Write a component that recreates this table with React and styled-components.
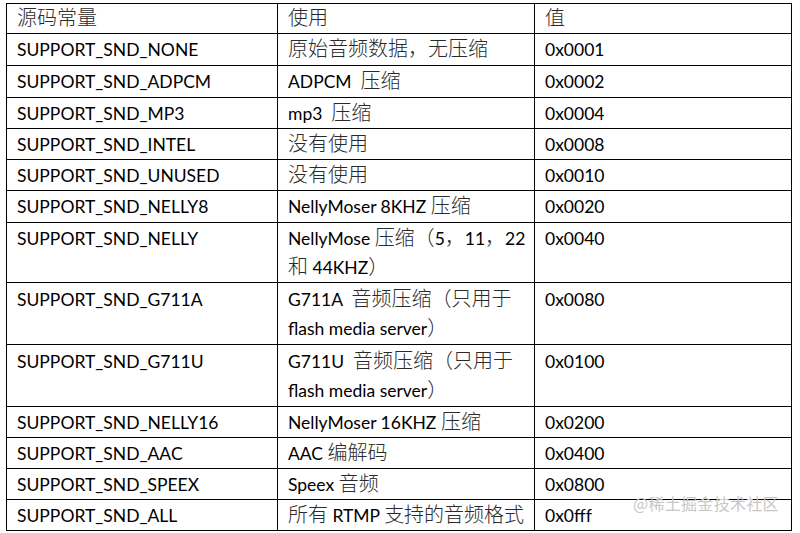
import React from 'react';
import styled, { createGlobalStyle } from 'styled-components';

const GlobalStyle = createGlobalStyle`
  body {
    margin: 0;
    background: #fff;
  }
`;

const Page = styled.div`
  position: relative;
  width: 800px;
  height: 533px;
  overflow: hidden;
  padding: 3px 0 0 6px;
  box-sizing: border-box;
`;

const Table = styled.table`
  border-collapse: collapse;
  width: 785px;
  table-layout: fixed;
  font-family: "Lato", "Noto Sans CJK SC", sans-serif;
  font-size: 17.5px;
  color: #000;
`;

const Row = styled.tr`
  height: ${p => p.$h}px;
`;

const Cell = styled.td`
  border: 1px solid #000;
  padding: ${p => p.$pt}px 10px 0 10px;
  vertical-align: top;
  line-height: ${p => (p.$multi ? 28.5 : 28)}px;
  white-space: nowrap;
  overflow: hidden;
`;

const Cjk = styled.span`
  font-family: "Noto Sans CJK SC", sans-serif;
  font-size: 20px;
  line-height: 1;
  font-weight: 300;
  color: #2a2a2a;
`;

const Watermark = styled.div`
  position: absolute;
  left: 633px;
  top: 491px;
  font-family: "Noto Sans CJK SC", sans-serif;
  font-size: 16px;
  color: #c8c8c8;
  letter-spacing: 0.3px;
`;

const rows = [
  { h: 30, pt: 1, a: <Cjk>源码常量</Cjk>, b: <Cjk>使用</Cjk>, c: <Cjk>值</Cjk> },
  { h: 32, a: 'SUPPORT_SND_NONE', b: <Cjk>原始音频数据，无压缩</Cjk>, c: '0x0001' },
  { h: 32, a: 'SUPPORT_SND_ADPCM', b: <>ADPCM&nbsp; <Cjk>压缩</Cjk></>, c: '0x0002' },
  { h: 31, a: 'SUPPORT_SND_MP3', b: <>mp3&nbsp; <Cjk>压缩</Cjk></>, c: '0x0004' },
  { h: 31, a: 'SUPPORT_SND_INTEL', b: <Cjk>没有使用</Cjk>, c: '0x0008' },
  { h: 31, a: 'SUPPORT_SND_UNUSED', b: <Cjk>没有使用</Cjk>, c: '0x0010' },
  { h: 32, a: 'SUPPORT_SND_NELLY8', b: <>NellyMoser 8KHZ <Cjk>压缩</Cjk></>, c: '0x0020' },
  {
    h: 60,
    multi: true,
    a: 'SUPPORT_SND_NELLY',
    b: <>NellyMose <Cjk>压缩（</Cjk>5<Cjk>，</Cjk>11<Cjk>，</Cjk>22<br /><Cjk>和</Cjk> 44KHZ<Cjk>）</Cjk></>,
    c: '0x0040',
  },
  {
    h: 62,
    multi: true,
    pt: 3,
    a: 'SUPPORT_SND_G711A',
    b: <>G711A&nbsp; <Cjk>音频压缩（只用于</Cjk><br />flash media server<Cjk>）</Cjk></>,
    c: '0x0080',
  },
  {
    h: 62,
    multi: true,
    pt: 3,
    a: 'SUPPORT_SND_G711U',
    b: <>G711U&nbsp; <Cjk>音频压缩（只用于</Cjk><br />flash media server<Cjk>）</Cjk></>,
    c: '0x0100',
  },
  { h: 31, a: 'SUPPORT_SND_NELLY16', b: <>NellyMoser 16KHZ <Cjk>压缩</Cjk></>, c: '0x0200' },
  { h: 31, a: 'SUPPORT_SND_AAC', b: <>AAC <Cjk>编解码</Cjk></>, c: '0x0400' },
  { h: 31, a: 'SUPPORT_SND_SPEEX', b: <>Speex <Cjk>音频</Cjk></>, c: '0x0800' },
  { h: 31, a: 'SUPPORT_SND_ALL', b: <><Cjk>所有</Cjk> RTMP <Cjk>支持的音频格式</Cjk></>, c: '0x0fff' },
];

export default function App() {
  return (
    <>
      <GlobalStyle />
      <Page>
        <Table>
          <colgroup>
            <col style={{ width: 271 }} />
            <col style={{ width: 257 }} />
            <col style={{ width: 257 }} />
          </colgroup>
          <tbody>
            {rows.map((r, i) => {
              const pt = r.pt ?? 2;
              return (
                <Row key={i} $h={r.h}>
                  <Cell $multi={r.multi} $pt={pt}>{r.a}</Cell>
                  <Cell $multi={r.multi} $pt={pt}>{r.b}</Cell>
                  <Cell $multi={r.multi} $pt={pt}>{r.c}</Cell>
                </Row>
              );
            })}
          </tbody>
        </Table>
        <Watermark>@稀土掘金技术社区</Watermark>
      </Page>
    </>
  );
}
